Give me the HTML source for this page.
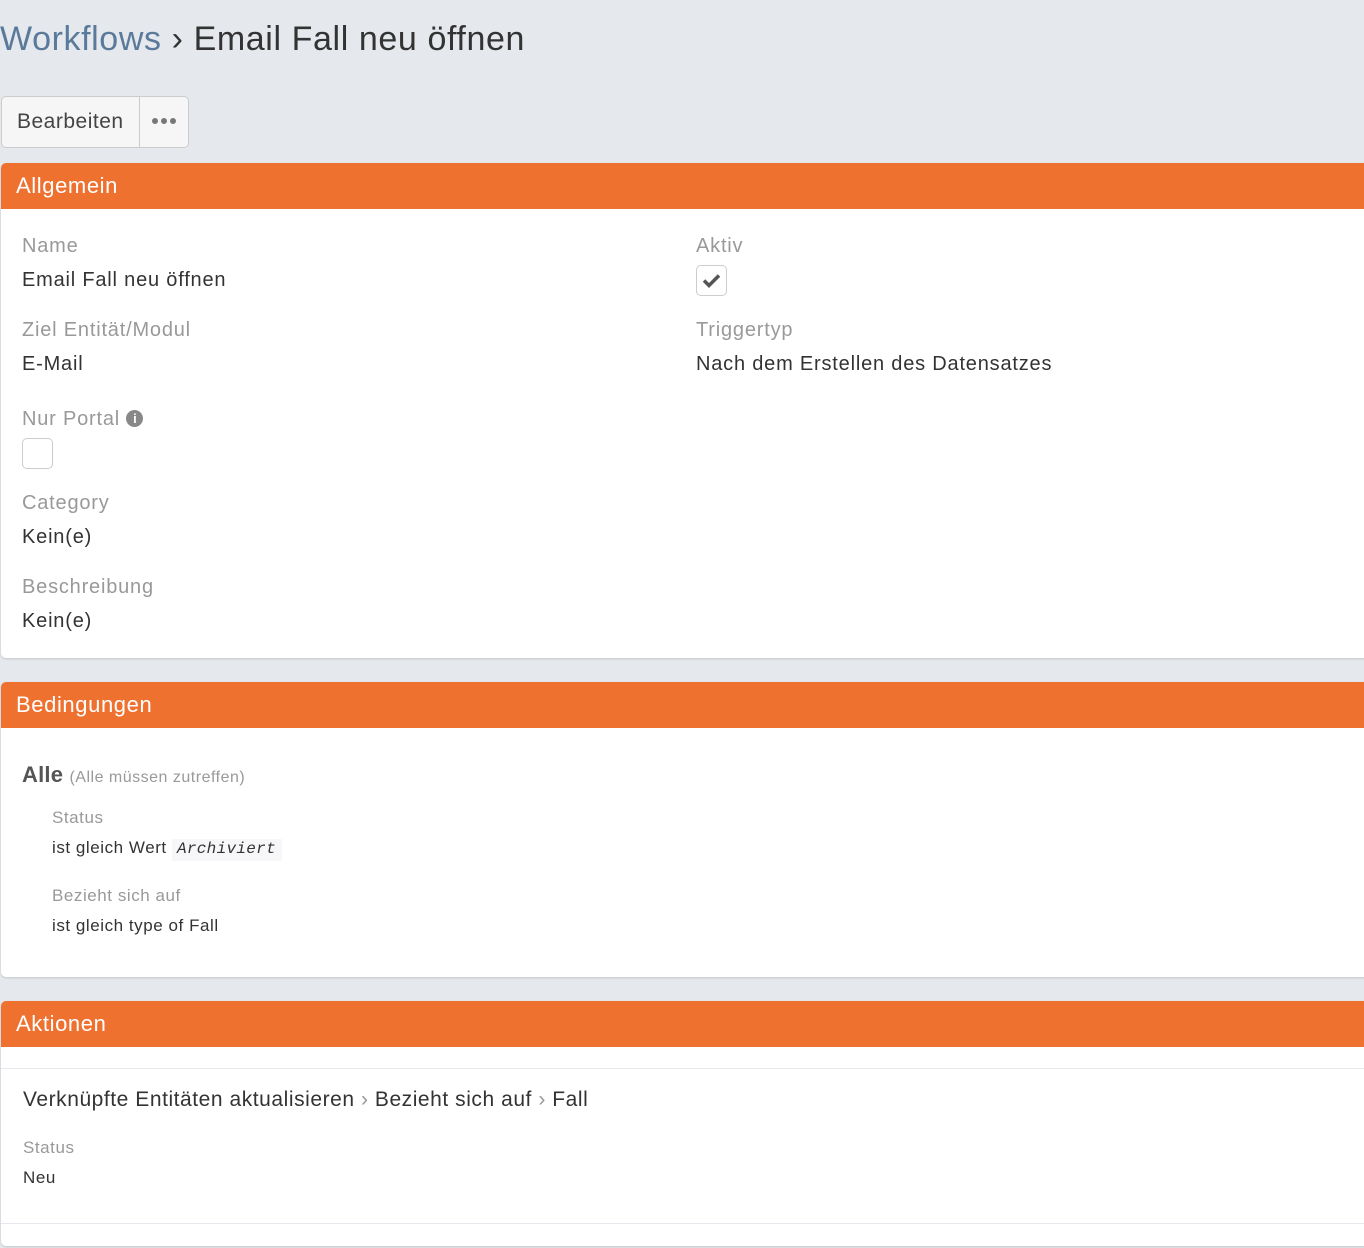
<!DOCTYPE html>
<html><head><meta charset="utf-8"><style>
*{box-sizing:border-box;margin:0;padding:0}
body{width:1364px;height:1248px;background:#e5e8ec;font-family:"Liberation Sans",sans-serif;position:relative;overflow:hidden;color:#333}
.a{position:absolute;white-space:nowrap;line-height:24px}
.lbl{color:#999;font-size:20px;letter-spacing:.8px}
.val{color:#333;font-size:20px;letter-spacing:.8px}
.panel{position:absolute;left:1px;width:1370px;background:#fff;border-radius:5px;box-shadow:0 1px 2px rgba(0,0,0,.15);overflow:hidden}
.hd{height:46px;background:#ee7130;color:#fff;font-size:22px;line-height:46px;padding-left:15px;letter-spacing:.6px}
.cb{position:absolute;width:31px;height:31px;border:1px solid #ccc;border-radius:5px;background:#fff}
.s{font-size:17px;letter-spacing:.55px}
</style></head><body>
<div class="a" style="left:0;top:20px;font-size:34px;line-height:38px;letter-spacing:.6px"><span style="color:#5a7a9c">Workflows</span> <span style="color:#333">› Email Fall neu öffnen</span></div>
<div style="position:absolute;left:1px;top:96px;width:188px;height:52px;border:1px solid #ccc;border-radius:5px;background:#f6f6f6"></div>
<div style="position:absolute;left:139px;top:97px;width:1px;height:50px;background:#ccc"></div>
<div class="a" style="left:17px;top:110px;font-size:21px;color:#444;letter-spacing:.5px">Bearbeiten</div>
<div style="position:absolute;left:152px;top:118px;display:flex;gap:3px"><i style="width:6px;height:6px;border-radius:3px;background:#777"></i><i style="width:6px;height:6px;border-radius:3px;background:#777"></i><i style="width:6px;height:6px;border-radius:3px;background:#777"></i></div>

<div class="panel" style="top:163px;height:495px"><div class="hd">Allgemein</div></div>
<div class="a lbl" style="left:22px;top:234px">Name</div>
<div class="a val" style="left:22px;top:268px">Email Fall neu öffnen</div>
<div class="a lbl" style="left:22px;top:318px">Ziel Entität/Modul</div>
<div class="a val" style="left:22px;top:352px">E-Mail</div>
<div class="a lbl" style="left:22px;top:407px">Nur Portal <span style="display:inline-block;width:17px;height:17px;border-radius:50%;background:#888;color:#fff;font-size:13px;line-height:17px;text-align:center;font-weight:bold;vertical-align:2px;letter-spacing:0">i</span></div>
<div class="cb" style="left:22px;top:438px"></div>
<div class="a lbl" style="left:22px;top:491px">Category</div>
<div class="a val" style="left:22px;top:525px">Kein(e)</div>
<div class="a lbl" style="left:22px;top:575px">Beschreibung</div>
<div class="a val" style="left:22px;top:609px">Kein(e)</div>
<div class="a lbl" style="left:696px;top:234px">Aktiv</div>
<div class="cb" style="left:696px;top:265px"><svg width="31" height="31" viewBox="0 0 31 31" style="position:absolute;left:-1px;top:-1px"><path d="M8 15.5l5 5 10-10" fill="none" stroke="#555" stroke-width="3.5"/></svg></div>
<div class="a lbl" style="left:696px;top:318px">Triggertyp</div>
<div class="a val" style="left:696px;top:352px">Nach dem Erstellen des Datensatzes</div>

<div class="panel" style="top:682px;height:295px"><div class="hd">Bedingungen</div></div>
<div class="a" style="left:22px;top:763px;font-size:22px;color:#555;font-weight:bold;letter-spacing:.2px">Alle <span style="font-size:16px;color:#999;font-weight:normal;letter-spacing:.5px">(Alle müssen zutreffen)</span></div>
<div class="a lbl s" style="left:52px;top:806px">Status</div>
<div class="a val s" style="left:52px;top:836px">ist gleich Wert <span style="background:#f7f7f9;font-family:'Liberation Mono',monospace;font-style:italic;font-size:16px;padding:1px 6px 3px 5px;letter-spacing:.3px">Archiviert</span></div>
<div class="a lbl s" style="left:52px;top:884px">Bezieht sich auf</div>
<div class="a val s" style="left:52px;top:914px">ist gleich type of Fall</div>

<div class="panel" style="top:1001px;height:245px"><div class="hd">Aktionen</div>
<div style="position:absolute;left:0;top:67px;width:100%;height:1px;background:#e5e8ec"></div>
<div style="position:absolute;left:0;top:222px;width:100%;height:1px;background:#e5e8ec"></div></div>
<div class="a val" style="left:23px;top:1088px;font-size:21px;letter-spacing:.55px">Verknüpfte Entitäten aktualisieren <span style="color:#999">›</span> Bezieht sich auf <span style="color:#999">›</span> Fall</div>
<div class="a lbl s" style="left:23px;top:1136px">Status</div>
<div class="a val s" style="left:23px;top:1166px">Neu</div>
</body></html>
